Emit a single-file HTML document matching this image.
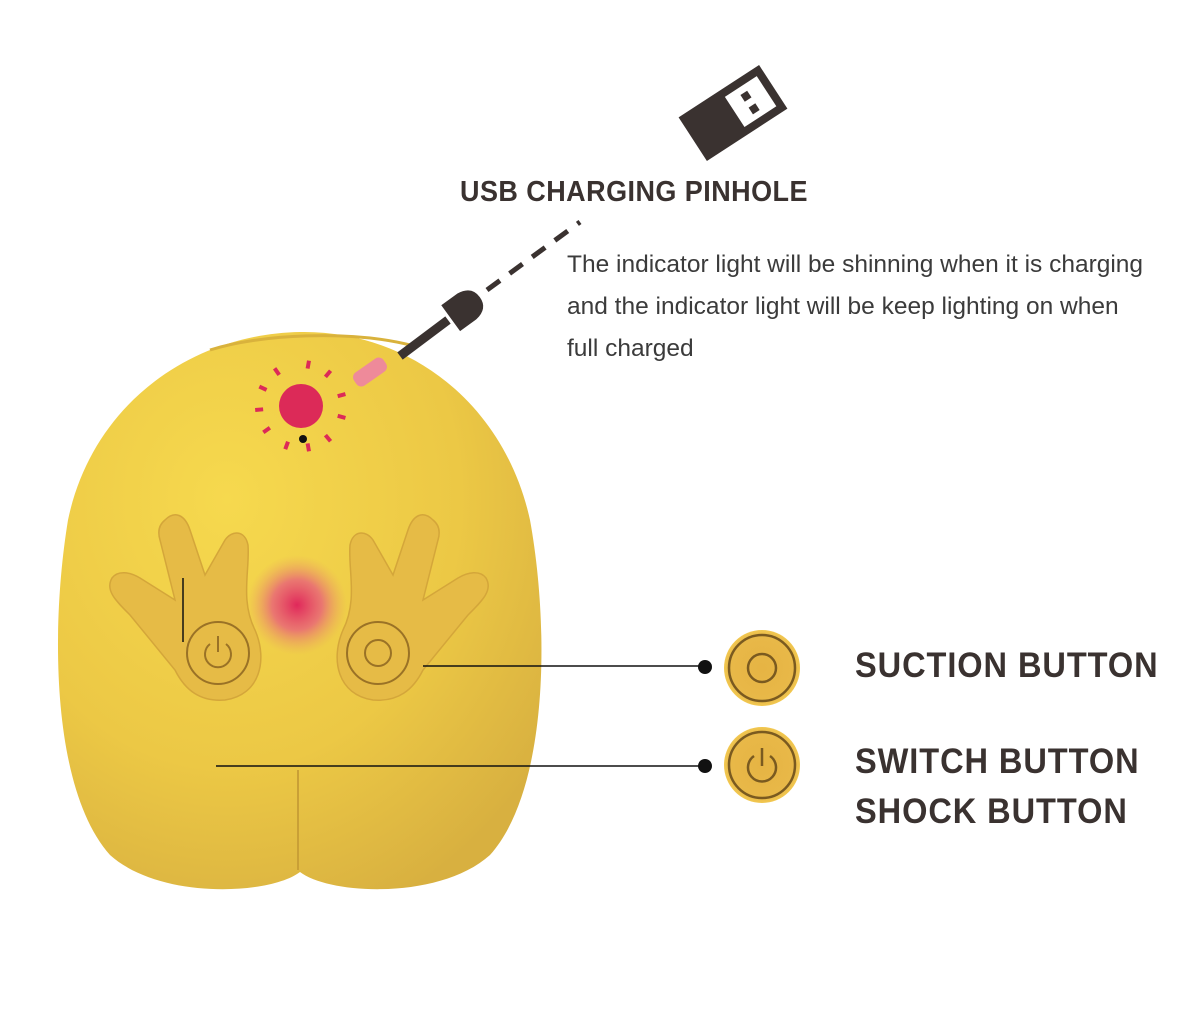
<!DOCTYPE html>
<html><head><meta charset="utf-8"><style>
html,body{margin:0;padding:0;background:#fff;width:1200px;height:1025px;overflow:hidden}
.t{position:absolute;font-family:"Liberation Sans",sans-serif;color:#3a3230;font-weight:bold;white-space:nowrap;transform:scaleX(0.93);transform-origin:left}
.d{position:absolute;font-family:"Liberation Sans",sans-serif;color:#3b3b3b;font-size:24.5px;line-height:42px;left:567px;top:244px;white-space:nowrap}
</style></head><body>
<svg width="1200" height="1025" style="position:absolute;left:0;top:0">
<defs>
<radialGradient id="bg" cx="0.35" cy="0.3" r="0.8">
<stop offset="0" stop-color="#f6d94e"/><stop offset="0.6" stop-color="#ecc845"/><stop offset="1" stop-color="#d8b040"/></radialGradient>
<radialGradient id="glow"><stop offset="0" stop-color="#e0285a"/><stop offset="0.5" stop-color="#e8607a" stop-opacity="0.8"/><stop offset="1" stop-color="#e8a060" stop-opacity="0"/></radialGradient>
<radialGradient id="btn" cx="0.5" cy="0.5" r="0.5"><stop offset="0" stop-color="#e6b444"/><stop offset="0.85" stop-color="#e8b848"/><stop offset="1" stop-color="#f2c850"/></radialGradient>
</defs>
<g transform="translate(733,113) rotate(-33)">
<rect x="-48" y="-26" width="96" height="52" fill="#3a3230"/>
<rect x="2" y="-18" width="38" height="36" fill="#fff"/>
<rect x="16" y="-11" width="8" height="8" fill="#3a3230"/>
<rect x="16" y="4" width="8" height="8" fill="#3a3230"/>
</g>
<line x1="487" y1="290" x2="580" y2="222" stroke="#3a3230" stroke-width="5" stroke-dasharray="16,12"/>
<path d="M300,332 C410,330 505,405 530,520 C550,630 548,790 490,855 C440,900 330,895 300,872 C270,895 160,900 110,855 C52,790 50,630 68,520 C92,405 190,334 300,332 Z" fill="url(#bg)"/>
<path d="M210,350 C260,334 350,330 410,345" stroke="#d9b23c" stroke-width="3" fill="none"/>
<line x1="400" y1="356" x2="448" y2="320" stroke="#3a3230" stroke-width="9"/>
<g transform="translate(462,310) rotate(-36)">
<path d="M-14,-16 L6,-16 Q22,-14 22,0 Q22,14 6,16 L-14,16 Z" fill="#3a3230"/>
</g>
<line x1="298" y1="770" x2="298" y2="870" stroke="#c9a036" stroke-width="2"/>
<g transform="translate(370,372) rotate(-35)"><rect x="-18" y="-8" width="36" height="16" rx="6" fill="#ee8a9a"/></g>
<circle cx="301" cy="406" r="22" fill="#dc2a58"/>
<g stroke="#dc2a58" stroke-width="4">
<line x1="301" y1="360" x2="301" y2="368" transform="rotate(10 301 406)"/>
<line x1="301" y1="360" x2="301" y2="368" transform="rotate(40 301 406)"/>
<line x1="301" y1="360" x2="301" y2="368" transform="rotate(75 301 406)"/>
<line x1="301" y1="360" x2="301" y2="368" transform="rotate(105 301 406)"/>
<line x1="301" y1="360" x2="301" y2="368" transform="rotate(140 301 406)"/>
<line x1="301" y1="360" x2="301" y2="368" transform="rotate(170 301 406)"/>
<line x1="301" y1="360" x2="301" y2="368" transform="rotate(200 301 406)"/>
<line x1="301" y1="360" x2="301" y2="368" transform="rotate(235 301 406)"/>
<line x1="301" y1="360" x2="301" y2="368" transform="rotate(265 301 406)"/>
<line x1="301" y1="360" x2="301" y2="368" transform="rotate(295 301 406)"/>
<line x1="301" y1="360" x2="301" y2="368" transform="rotate(325 301 406)"/>
</g>
<circle cx="303" cy="439" r="4" fill="#111"/>
<circle cx="297" cy="605" r="50" fill="url(#glow)"/>
<g fill="#e6bb46" stroke="#d4a63a" stroke-width="1.5">
<path d="M165,520 C175,510 185,515 190,530 L205,575 L225,540 C232,530 245,530 248,545 C250,570 240,600 255,630 C268,660 260,695 225,700 C200,702 185,690 175,670 L130,615 C115,600 105,590 112,578 C118,570 130,572 140,578 L175,600 L160,540 C157,530 160,524 165,520 Z"/>
<path d="M433,520 C423,510 413,515 408,530 L393,575 L373,540 C366,530 353,530 350,545 C348,570 358,600 343,630 C330,660 338,695 373,700 C398,702 413,690 423,670 L468,615 C483,600 493,590 486,578 C480,570 468,572 458,578 L423,600 L438,540 C441,530 438,524 433,520 Z"/>
</g>
<g fill="none" stroke="#9a7226" stroke-width="2">
<circle cx="218" cy="653" r="31"/><circle cx="378" cy="653" r="31"/>
<circle cx="378" cy="653" r="13"/>
<path d="M210,644 A13,13 0 1,0 226,644"/><line x1="218" y1="636" x2="218" y2="652"/>
</g>
<line x1="183" y1="578" x2="183" y2="642" stroke="#111" stroke-width="1.5"/>
<line x1="423" y1="666" x2="705" y2="666" stroke="#111" stroke-width="1.5"/>
<line x1="216" y1="766" x2="705" y2="766" stroke="#111" stroke-width="1.5"/>
<circle cx="705" cy="667" r="7" fill="#111"/>
<circle cx="705" cy="766" r="7" fill="#111"/>
<circle cx="762" cy="668" r="38" fill="url(#btn)"/>
<g fill="none" stroke="#7a5a20" stroke-width="2.5">
<circle cx="762" cy="668" r="33"/><circle cx="762" cy="668" r="14"/>
</g>
<circle cx="762" cy="765" r="38" fill="url(#btn)"/>
<g fill="none" stroke="#7a5a20" stroke-width="2.5">
<circle cx="762" cy="765" r="33"/>
<path d="M754,756 A14,14 0 1,0 770,756"/><line x1="762" y1="748" x2="762" y2="766"/>
</g>
</svg>
<div class="t" style="left:460px;top:176px;font-size:29px;letter-spacing:0.5px">USB CHARGING PINHOLE</div>
<div class="d">The indicator light will be shinning when it is charging<br>and the indicator light will be keep lighting on when<br>full charged</div>
<div class="t" style="left:855px;top:646px;font-size:35px;letter-spacing:1px">SUCTION BUTTON</div>
<div class="t" style="left:855px;top:742px;font-size:35px;letter-spacing:1px">SWITCH BUTTON</div>
<div class="t" style="left:855px;top:792px;font-size:35px;letter-spacing:1px">SHOCK BUTTON</div>
</body></html>
